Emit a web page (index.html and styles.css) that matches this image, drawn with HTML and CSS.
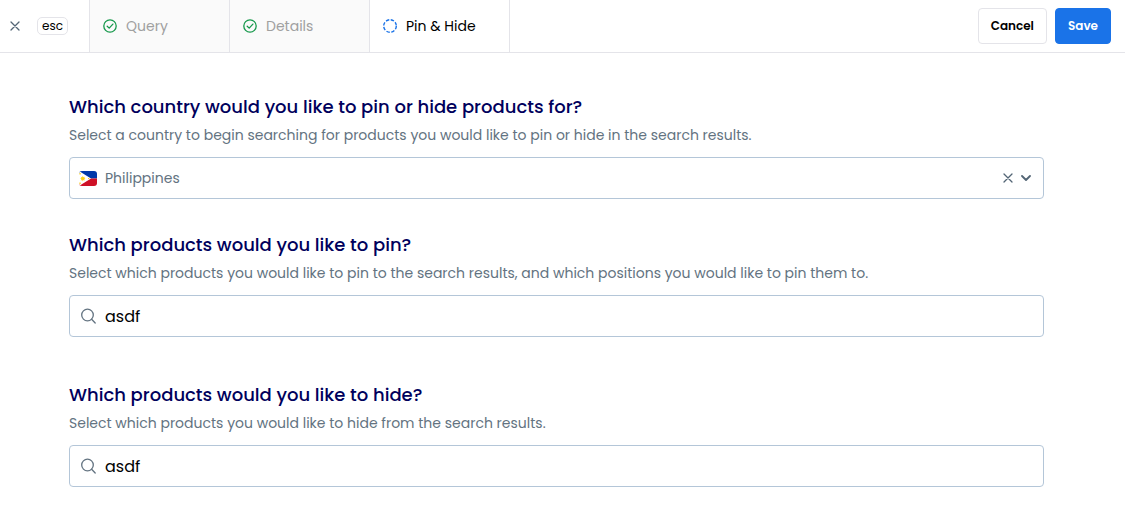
FILE: index.html
```html
<!DOCTYPE html>
<html lang="en">
<head>
  <meta charset="UTF-8">
  <meta name="viewport" content="width=device-width, initial-scale=1.0">
  <title>Pin &amp; Hide</title>
  <link rel="stylesheet" href="styles.css">
</head>
<body>

  <header class="topbar">
    <div class="escape">
      <button type="button" class="icon-button" aria-label="Close">
        <svg width="10" height="10" viewBox="0 0 10 10"><path d="M1 1l8 8M9 1L1 9"/></svg>
      </button>
      <kbd class="key">esc</kbd>
    </div>

    <nav class="steps">
      <a href="#query" class="step">
        <svg class="done" width="14" height="14" viewBox="0 0 14 14"><circle cx="7" cy="7" r="6.2"/><path d="M4.2 7.2l2 1.9 3.7-4"/></svg>
        Query
      </a>
      <a href="#details" class="step">
        <svg class="done" width="14" height="14" viewBox="0 0 14 14"><circle cx="7" cy="7" r="6.2"/><path d="M4.2 7.2l2 1.9 3.7-4"/></svg>
        Details
      </a>
      <a href="#pin" class="step active" aria-current="step">
        <svg class="current" width="14" height="14" viewBox="0 0 14 14"><circle cx="7" cy="7" r="6.3"/></svg>
        Pin &amp; Hide
      </a>
    </nav>

    <div class="actions">
      <button type="button" class="button">Cancel</button>
      <button type="submit" form="pinForm" class="button primary">Save</button>
    </div>
  </header>

  <main>
    <form id="pinForm">
      <section class="country">
        <h2><label for="country">Which country would you like to pin or hide products for?</label></h2>
        <p>Select a country to begin searching for products you would like to pin or hide in the search results.</p>
        <div class="field">
          <svg class="flag" width="18" height="15" viewBox="0 0 18 15">
            <defs><clipPath id="flagShape"><rect width="18" height="15" rx="3"/></clipPath></defs>
            <g clip-path="url(#flagShape)">
              <path fill="#0038a8" d="M0 0h18v7.5H0z"/>
              <path fill="#ce1126" d="M0 7.5h18V15H0z"/>
              <path fill="#fff" d="M0 0l12 7.5L0 15z"/>
              <path fill="#fcd116" d="M3.8 4.8l.6 1.5 1.5-.5-.7 1.3 1.4.5-1.4.5.7 1.4-1.5-.6-.6 1.5-.6-1.5-1.5.6.7-1.4-1.4-.5 1.4-.5-.7-1.3 1.5.5zM.4 2.1h1.3v1.3H.4zM.4 11.6h1.3v1.3H.4zM9 6.9h1.3v1.2H9z"/>
            </g>
          </svg>
          <select id="country">
            <option selected>Philippines</option>
          </select>
          <button type="button" class="icon-button" aria-label="Clear country">
            <svg width="10" height="10" viewBox="0 0 10 10"><path d="M1 1l8 8M9 1L1 9"/></svg>
          </button>
          <svg class="chevron" width="10" height="6" viewBox="0 0 10 6"><path d="M1 1l4 4 4-4"/></svg>
        </div>
      </section>

      <section class="pin">
        <h2><label for="pin">Which products would you like to pin?</label></h2>
        <p>Select which products you would like to pin to the search results, and which positions you would like to pin them to.</p>
        <div class="field">
          <svg class="search" width="18" height="18" viewBox="0 0 18 18"><circle cx="8.5" cy="8" r="5.8"/><path d="M12.6 12.2l3.6 3.8"/></svg>
          <input type="text" id="pin" value="asdf">
        </div>
      </section>

      <section class="hide">
        <h2><label for="hide">Which products would you like to hide?</label></h2>
        <p>Select which products you would like to hide from the search results.</p>
        <div class="field">
          <svg class="search" width="18" height="18" viewBox="0 0 18 18"><circle cx="8.5" cy="8" r="5.8"/><path d="M12.6 12.2l3.6 3.8"/></svg>
          <input type="text" id="hide" value="asdf">
        </div>
      </section>
    </form>
  </main>

</body>
</html>
```
FILE: styles.css
```css
* {
  box-sizing: border-box;
}

body {
  background-color: white;
  color: black;
  font-family: Poppins, Inter, sans-serif;
  font-size: 14px;
  margin: 0;
}

button, input, select {
  font-family: inherit;
}

svg {
  flex: none;
  fill: none;
  stroke-linecap: round;
  stroke-linejoin: round;
}

/* Top bar */
.topbar {
  display: flex;
  height: 53px;
  border-bottom: 1px solid #e4e4e9;
}

.escape {
  display: flex;
  align-items: center;
  gap: 17px;
  width: 90px;
  padding-left: 10px;
  border-right: 1px solid #e4e4e9;
}

.icon-button {
  display: flex;
  padding: 0;
  border: none;
  background: none;
  cursor: pointer;
}

.icon-button svg {
  stroke: #536575;
  stroke-width: 1.3;
}

.key {
  padding: 0 4px;
  border: 1px solid #e4e4e9;
  border-radius: 5px;
  font-family: inherit;
  font-size: 12px;
  line-height: 16px;
}

.steps {
  display: flex;
}

.step {
  display: flex;
  align-items: center;
  gap: 9px;
  width: 140px;
  padding-left: 13px;
  border-right: 1px solid #e4e4e9;
  background-color: #fafafa;
  color: #a0a0a0;
  text-decoration: none;
}

.step.active {
  background-color: white;
  color: black;
}

.done {
  stroke: #16984b;
  stroke-width: 1.3;
}

.current {
  stroke: #1a73e8;
  stroke-width: 1.4;
  stroke-linecap: butt;
  stroke-dasharray: 3.4 1.55;
}

.actions {
  display: flex;
  align-items: center;
  gap: 8px;
  margin-left: auto;
  padding-right: 14px;
}

.button {
  height: 36px;
  padding: 0 12px;
  border: 1px solid #e4e4e9;
  border-radius: 4px;
  background-color: white;
  color: black;
  font-size: 12px;
  font-weight: 600;
  cursor: pointer;
}

.button.primary {
  border-color: #1a73e8;
  background-color: #1a73e8;
  color: white;
}

/* Form */
main {
  padding: 40px 81px 22px 69px;
}

.pin {
  margin-top: 32px;
}

.hide {
  margin-top: 44px;
}

h2 {
  margin: 0;
  color: #00005c;
  font-size: 18px;
  font-weight: 500;
  line-height: 28px;
}

p {
  margin: 0 0 8px;
  color: #637381;
  line-height: 28px;
}

.field {
  display: flex;
  align-items: center;
  gap: 8px;
  height: 42px;
  padding: 0 12px 0 9px;
  border: 1px solid #b4c6d8;
  border-radius: 4px;
}

.field input,
.field select {
  flex: 1;
  min-width: 0;
  height: 40px;
  padding: 0;
  border: none;
  outline: none;
  background: none;
  color: black;
  font-size: 16px;
}

.field select {
  appearance: none;
  color: #637381;
  font-size: 14px;
}

.search {
  stroke: #637381;
  stroke-width: 1.3;
}

.chevron {
  stroke: #536575;
  stroke-width: 1.8;
}
```
